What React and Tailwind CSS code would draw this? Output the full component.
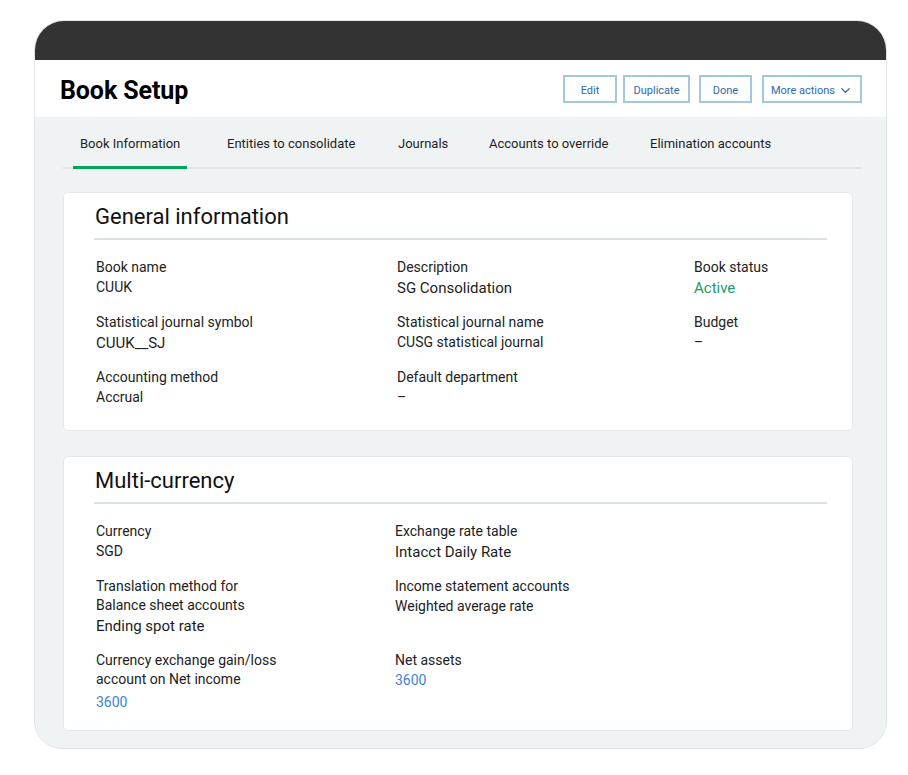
import React from "react";
import { ChevronDown } from "lucide-react";

const tabs = [
    { label: "Book Information", w: "w-[147px]", active: true },
    { label: "Entities to consolidate", w: "w-[171px]" },
    { label: "Journals", w: "w-[91px]" },
    { label: "Accounts to override", w: "w-[161px]" },
    { label: "Elimination accounts", w: "w-[160px]" },
];

function Field({ label, value, big, tone, extra = "" }) {
    const toneClass =
        tone === "green" ? "text-[#1e9a68]" : tone === "blue" ? "text-[#3f84cf]" : "text-[#1d1d1d]";
    return (
        <div className="flex flex-col">
            <div className="text-[14px] leading-[19px] text-[#222]">{label}</div>
            <div className={`${big ? "text-[15px] leading-[22px]" : "text-[14px] leading-[21px]"} ${toneClass} ${extra}`}>
                {value}
            </div>
        </div>
    );
}

function Card({ title, children, className }) {
    return (
        <div className={`bg-white rounded-[5px] border border-[#e4e9eb] pl-[30px] pr-[25px] ${className}`}>
            <div className="pt-[9px] pb-[7px] border-b-2 border-[#dae1e5]">
                <h2 className="pl-[1px] text-[22px] leading-[29px] text-[#111] font-normal">{title}</h2>
            </div>
            {children}
        </div>
    );
}

const btn = "h-[28px] border-2 border-[#a3c6e2] text-[11px] leading-[14px] pt-[5px] text-[#2f6aa7] flex items-center justify-center";

export default function App() {
    return (
        <div className="min-h-screen bg-white pt-[20px] pl-[34px]" style={{ fontFamily: "Roboto, 'Liberation Sans', sans-serif" }}>
            <div className="w-[853px] h-[729px] rounded-t-[30px] rounded-b-[28px] border border-[#e2e5e6] overflow-hidden flex flex-col bg-[#f0f3f4]">
                {/* top dark bar */}
                <div className="h-[39px] bg-[#333333] shrink-0" />

                {/* header */}
                <div className="h-[57px] bg-white flex items-center justify-between pl-[25px] pr-[24px] shrink-0">
                    <h1 className="mt-[5px] text-[25px] font-bold text-black tracking-[-0.1px]">Book Setup</h1>
                    <div className="flex items-center">
                        <button className={`${btn} w-[54px]`}>Edit</button>
                        <button className={`${btn} ml-[6px] w-[67px]`}>Duplicate</button>
                        <button className={`${btn} ml-[9px] w-[53px]`}>Done</button>
                        <button className={`${btn} ml-[10px] w-[100px] gap-[3px]`}>
                            More actions
                            <ChevronDown size={15} strokeWidth={2.2} className="-mt-[1px]" />
                        </button>
                    </div>
                </div>

                {/* gray content */}
                <div className="flex-1 pl-[28px] pr-[25px]">
                    <div className="flex pl-[10px] pt-[14px] border-b-2 border-[#dfe4e7]">
                        {tabs.map((t) => (
                            <div key={t.label} className={`${t.w} shrink-0`}>
                                <span
                                    className={`inline-block px-[7px] pb-[12px] text-[13px] leading-[20px] text-[#1e1e1e] border-b-[3px] -mb-[2px] ${
                                        t.active ? "border-[#00a65a]" : "border-transparent"
                                    }`}
                                >
                                    {t.label}
                                </span>
                            </div>
                        ))}
                    </div>

                    <div className="mr-[8px]">
                        <Card title="General information" className="mt-[23px] h-[239px]">
                            <div className="pl-[2px] pt-[18px] grid grid-cols-[301px_297px_1fr] gap-y-[14px]">
                                <Field label="Book name" value="CUUK" />
                                <Field label="Description" value="SG Consolidation" big />
                                <Field label="Book status" value="Active" big tone="green" />
                                <Field label="Statistical journal symbol" value="CUUK__SJ" big />
                                <Field label="Statistical journal name" value="CUSG statistical journal" />
                                <Field label="Budget" value="–" />
                                <Field label="Accounting method" value="Accrual" />
                                <Field label="Default department" value="–" />
                            </div>
                        </Card>

                        <Card title="Multi-currency" className="mt-[25px] h-[275px]">
                            <div className="pl-[2px] pt-[18px] grid grid-cols-[299px_1fr] gap-y-[14px]">
                                <Field label="Currency" value="SGD" />
                                <Field label="Exchange rate table" value="Intacct Daily Rate" big />
                                <Field
                                    label={
                                        <>
                                            Translation method for
                                            <br />
                                            Balance sheet accounts
                                        </>
                                    }
                                    value="Ending spot rate"
                                    big
                                />
                                <div className="self-start">
                                    <Field label="Income statement accounts" value="Weighted average rate" />
                                </div>
                                <Field
                                    label={
                                        <>
                                            Currency exchange gain/loss
                                            <br />
                                            account on Net income
                                        </>
                                    }
                                    value="3600"
                                    tone="blue"
                                    extra="mt-[3px]"
                                />
                                <div className="self-start">
                                    <Field label="Net assets" value="3600" tone="blue" />
                                </div>
                            </div>
                        </Card>
                    </div>
                </div>
            </div>
        </div>
    );
}
